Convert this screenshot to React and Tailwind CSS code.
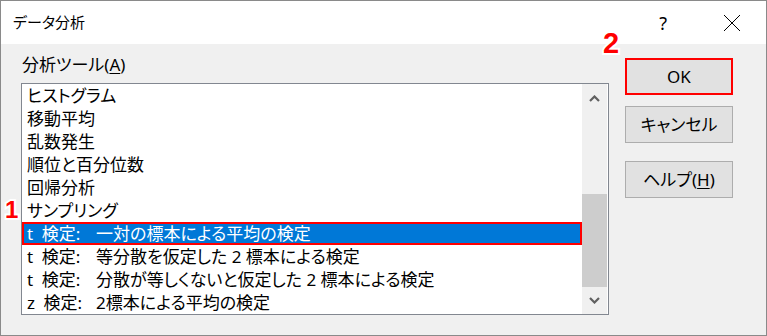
import React from "react";

const items = [
  ["", "ヒストグラム"],
  ["", "移動平均"],
  ["", "乱数発生"],
  ["", "順位と百分位数"],
  ["", "回帰分析"],
  ["", "サンプリング"],
  ["t\u2002検定:", "一対の標本による平均の検定"],
  ["t\u2002検定:", "等分散を仮定した 2 標本による検定"],
  ["t\u2002検定:", "分散が等しくないと仮定した 2 標本による検定"],
  ["z\u2002検定:", "2標本による平均の検定"],
];

const font = { fontFamily: '"Noto Sans", "Noto Sans CJK JP", sans-serif' };

function Badge({ children, className }) {
  return (
    <span
      className={
        "absolute font-bold text-[#ff0000] leading-none [paint-order:stroke_fill] [-webkit-text-stroke:4px_white] " +
        className
      }
      style={{ fontFamily: '"Liberation Sans", Arial, sans-serif' }}
    >
      {children}
    </span>
  );
}

function Row({ prefix, text, selected }) {
  return (
    <div
      className={
        "h-[23px] leading-[23px] text-[17px] pl-[5px] whitespace-pre flex " +
        (selected ? "bg-[#0078d7] text-white shadow-[inset_0_0_0_2px_#ff0000]" : "")
      }
    >
      {prefix ? <span className="w-[69px] shrink-0">{prefix}</span> : null}
      <span>{text}</span>
    </div>
  );
}

export default function App() {
  return (
    <div
      className="relative w-[767px] h-[336px] border border-[#8a8a8a] flex flex-col bg-[#f0f0f0] text-black [font-feature-settings:'palt'] overflow-hidden"
      style={font}
    >
      {/* Title bar */}
      <div className="h-[43px] bg-white flex items-center shrink-0">
        <span className="pl-[12px] text-[15px] leading-none flex-1">データ分析</span>
        <span className="text-[18px] leading-none mr-[56px] mt-[1px]">?</span>
        <svg width="18" height="18" viewBox="0 0 18 18" className="mr-[25px]">
          <path d="M1 1 L17 17 M17 1 L1 17" stroke="#000" strokeWidth="1" fill="none" />
        </svg>
      </div>

      {/* Body */}
      <div className="flex flex-1">
        <div className="pl-[20px] flex flex-col">
          <div className="mt-[9px] h-[23px] leading-[23px] text-[17px] pl-[1px]">
            分析ツール(<span className="underline underline-offset-2">A</span>)
          </div>
          <div className="mt-[7px] w-[588px] h-[232px] border border-[#828790] bg-white flex">
            <div className="w-[560px] flex flex-col">
              {items.map(([p, t], i) => (
                <Row key={i} prefix={p} text={t} selected={i === 6} />
              ))}
            </div>
            <div className="w-[25px] bg-[#f0f0f0] flex flex-col">
              <div className="h-[28px] flex items-center justify-center">
                <svg width="11" height="7" viewBox="0 0 11 7">
                  <path d="M1 6 L5.5 1.5 L10 6" stroke="#606060" strokeWidth="2.2" fill="none" />
                </svg>
              </div>
              <div className="h-[82px]" />
              <div className="h-[93px] bg-[#cdcdcd]" />
              <div className="flex-1 flex items-center justify-center">
                <svg width="11" height="7" viewBox="0 0 11 7">
                  <path d="M1 1 L5.5 5.5 L10 1" stroke="#606060" strokeWidth="2.2" fill="none" />
                </svg>
              </div>
            </div>
          </div>
        </div>

        <div className="ml-[16px] pt-[14px] flex flex-col">
          <button className="w-[108px] h-[37px] bg-[#e1e1e1] border-2 border-[#ff0000] text-[17px] leading-none">
            OK
          </button>
          <button className="mt-[11px] w-[108px] h-[37px] bg-[#e1e1e1] border border-[#adadad] text-[17px] leading-none">
            キャンセル
          </button>
          <button className="mt-[18px] w-[108px] h-[37px] bg-[#e1e1e1] border border-[#adadad] text-[17px] leading-none">
            ヘルプ(<span className="underline underline-offset-2">H</span>)
          </button>
        </div>
      </div>

      <Badge className="left-[4px] top-[197px] text-[24px]">1</Badge>
      <Badge className="left-[602px] top-[28px] text-[29px]">2</Badge>
    </div>
  );
}
